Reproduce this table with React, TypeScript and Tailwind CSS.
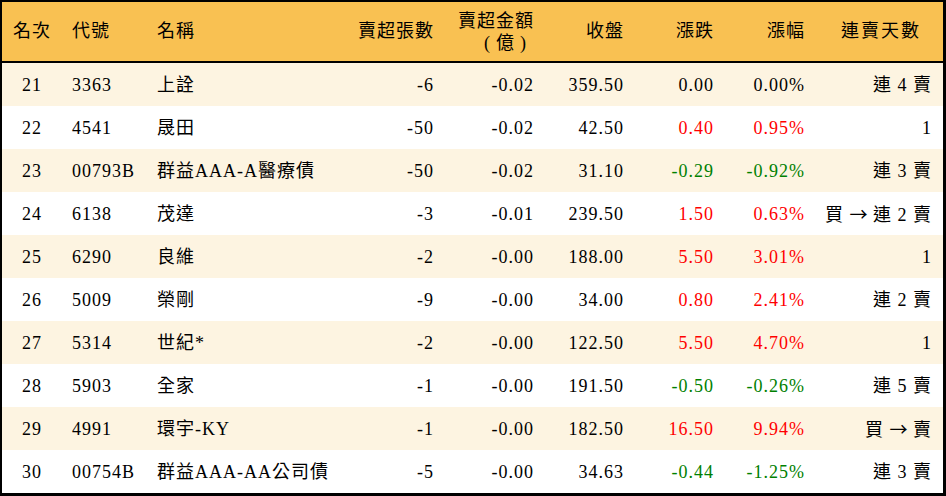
const rows = [
  { rank: 21, code: '3363', name: '上詮', vol: '-6', amt: '-0.02', close: '359.50', chg: '0.00', pct: '0.00%', streak: '連 4 賣' },
  { rank: 22, code: '4541', name: '晟田', vol: '-50', amt: '-0.02', close: '42.50', chg: '0.40', pct: '0.95%', streak: '1' },
  { rank: 23, code: '00793B', name: '群益AAA-A醫療債', vol: '-50', amt: '-0.02', close: '31.10', chg: '-0.29', pct: '-0.92%', streak: '連 3 賣' },
  { rank: 24, code: '6138', name: '茂達', vol: '-3', amt: '-0.01', close: '239.50', chg: '1.50', pct: '0.63%', streak: '買 → 連 2 賣' },
  { rank: 25, code: '6290', name: '良維', vol: '-2', amt: '-0.00', close: '188.00', chg: '5.50', pct: '3.01%', streak: '1' },
  { rank: 26, code: '5009', name: '榮剛', vol: '-9', amt: '-0.00', close: '34.00', chg: '0.80', pct: '2.41%', streak: '連 2 賣' },
  { rank: 27, code: '5314', name: '世紀*', vol: '-2', amt: '-0.00', close: '122.50', chg: '5.50', pct: '4.70%', streak: '1' },
  { rank: 28, code: '5903', name: '全家', vol: '-1', amt: '-0.00', close: '191.50', chg: '-0.50', pct: '-0.26%', streak: '連 5 賣' },
  { rank: 29, code: '4991', name: '環宇-KY', vol: '-1', amt: '-0.00', close: '182.50', chg: '16.50', pct: '9.94%', streak: '買 → 賣' },
  { rank: 30, code: '00754B', name: '群益AAA-AA公司債', vol: '-5', amt: '-0.00', close: '34.63', chg: '-0.44', pct: '-1.25%', streak: '連 3 賣' },
];

const cols = 'grid grid-cols-[60px_85px_196px_100px_100px_90px_90px_91px_129px]';

function tone(v: string) {
  if (v.startsWith('-')) return 'text-[#008000]';
  if (parseFloat(v) > 0) return 'text-[#ff0000]';
  return 'text-black';
}

// arrow drawn from the CJK font so it is long like the original
function Streak({ text }: { text: string }) {
  const parts = text.split('→');
  if (parts.length === 1) return <>{text}</>;
  return (
    <>
      {parts[0]}
      <span className="font-['Noto_Sans_CJK_TC'] tracking-normal">→</span>
      {parts[1]}
    </>
  );
}

export default function App() {
  return (
    <div
      className="w-[946px] h-[496px] bg-white text-black text-[18px] tracking-[1px] border-l-2 border-t-2 border-r-[3px] border-b-[3px] border-black"
      style={{ fontFamily: '"Liberation Serif", "Noto Sans CJK TC", serif' }}
    >
      <div className={`${cols} h-[61px] items-center bg-[#f9c152] border-b-2 border-black`}>
        <div className="text-center">名次</div>
        <div className="pl-[10px]">代號</div>
        <div className="pl-[10px]">名稱</div>
        <div className="text-right pr-[9px]">賣超張數</div>
        <div className="flex flex-col items-end pr-[9px] leading-[22px]">
          <span>賣超金額</span>
          <span className="pr-[2px] tracking-[6px]">(億)</span>
        </div>
        <div className="text-right pr-[9px]">收盤</div>
        <div className="text-right pr-[9px]">漲跌</div>
        <div className="text-right pr-[9px]">漲幅</div>
        <div className="text-right pr-[22px] tracking-[2px]">連賣天數</div>
      </div>
      {rows.map((r, i) => (
        <div key={r.rank} className={`${cols} h-[43px] items-center pt-[2px] ${i % 2 === 0 ? 'bg-[#fdf4e1]' : 'bg-white'}`}>
          <div className="text-center">{r.rank}</div>
          <div className="pl-[10px]">{r.code}</div>
          <div className="pl-[10px] whitespace-nowrap">{r.name}</div>
          <div className="text-right pr-[9px]">{r.vol}</div>
          <div className="text-right pr-[9px]">{r.amt}</div>
          <div className="text-right pr-[9px]">{r.close}</div>
          <div className={`text-right pr-[9px] ${tone(r.chg)}`}>{r.chg}</div>
          <div className={`text-right pr-[9px] ${tone(r.pct)}`}>{r.pct}</div>
          <div className="text-right pr-[11px] whitespace-nowrap">
            <Streak text={r.streak} />
          </div>
        </div>
      ))}
    </div>
  );
}
